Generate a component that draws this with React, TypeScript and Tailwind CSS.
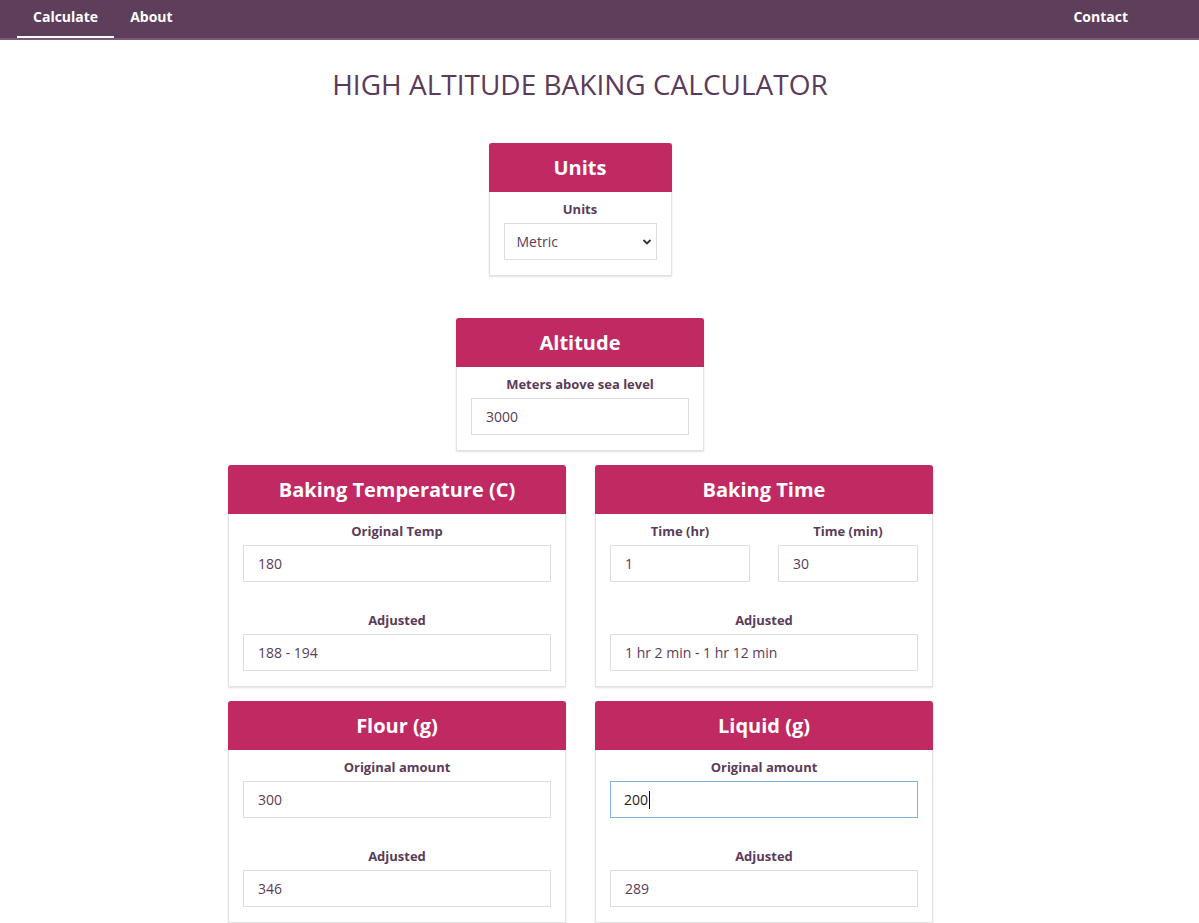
import React from "react";

const font = { fontFamily: '"Open Sans", "Liberation Sans", sans-serif' };

function Card({ title, width, pb, children }: { title: string; width: string; pb: string; children: React.ReactNode }) {
  return (
    <div className={`${width} bg-white rounded-t-[3px] border border-[#e2e2e2] shadow-[0_1px_2px_rgba(0,0,0,0.12)]`}>
      <div className="h-[49px] -mx-px -mt-px bg-[#c02962] rounded-t-[3px] flex items-center justify-center">
        <span className="text-white font-bold text-[20px] leading-none">{title}</span>
      </div>
      <div className={`px-[14px] pt-[8px] ${pb}`}>{children}</div>
    </div>
  );
}

function Label({ children }: { children: React.ReactNode }) {
  return <div className="text-center text-[13px] font-bold leading-[18px] text-[#5b3b5a] mb-[5px]">{children}</div>;
}

function Field({ value }: { value: string }) {
  return (
    <div className="h-[37px] border border-[#dddddd] flex items-center pl-[14px] text-[14px] text-[#5b3b5a]">{value}</div>
  );
}

function FocusedField({ value }: { value: string }) {
  return (
    <div className="h-[37px] border border-[#7db4da] flex items-center pl-[13px] text-[14px] text-[#222222]">
      {value}
      <span className="inline-block w-px h-[18px] bg-[#111] ml-px" />
    </div>
  );
}

export default function App() {
  return (
    <div className="min-h-screen bg-white" style={font}>
      <nav className="h-[40px] bg-[#5d3f5c] border-b-2 border-[#7b5a79]">
        <div className="w-[1160px] h-full flex justify-between pl-[17px] pr-[16px]">
          <div className="flex h-full">
            <div className="relative px-4 pb-[6px] flex items-center text-white text-[14px] font-bold">
              Calculate
              <span className="absolute left-0 right-0 bottom-0 h-[2px] bg-white" />
            </div>
            <div className="px-4 pb-[6px] flex items-center text-white text-[14px] font-bold">About</div>
          </div>
          <div className="px-4 pb-[6px] flex items-center text-white text-[14px] font-bold">Contact</div>
        </div>
      </nav>
      <main className="w-[1160px] flex flex-col items-center">
        <h1 className="mt-[25px] text-[28px] leading-[38px] text-[#5b3b5a] tracking-[0px]">HIGH ALTITUDE BAKING CALCULATOR</h1>
        <div className="mt-[40px]">
          <Card title="Units" width="w-[183px]" pb="pb-[15px]">
            <Label>Units</Label>
            <div className="relative h-[37px] border border-[#dddddd] flex items-center pl-[12px] text-[14px] text-[#5b3b5a]">
              Metric
              <svg className="absolute right-[4px] top-[13px]" width="10" height="10" viewBox="0 0 10 10">
                <path d="M1.5 3 L5 6.5 L8.5 3" fill="none" stroke="#333" strokeWidth="1.8" />
              </svg>
            </div>
          </Card>
        </div>
        <div className="mt-[42px]">
          <Card title="Altitude" width="w-[248px]" pb="pb-[15px]">
            <Label>Meters above sea level</Label>
            <Field value="3000" />
          </Card>
        </div>
        <div className="mt-[14px] ml-[1px] grid grid-cols-[338px_338px] gap-x-[29px] gap-y-[14px]">
          <Card title="Baking Temperature (C)" width="w-[338px]" pb="pb-[15px]">
            <Label>Original Temp</Label>
            <Field value="180" />
            <div className="mt-[29px]">
              <Label>Adjusted</Label>
              <Field value="188 - 194" />
            </div>
          </Card>
          <Card title="Baking Time" width="w-[338px]" pb="pb-[15px]">
            <div className="grid grid-cols-2 gap-x-[28px]">
              <div>
                <Label>Time (hr)</Label>
                <Field value="1" />
              </div>
              <div>
                <Label>Time (min)</Label>
                <Field value="30" />
              </div>
            </div>
            <div className="mt-[29px]">
              <Label>Adjusted</Label>
              <Field value="1 hr 2 min - 1 hr 12 min" />
            </div>
          </Card>
          <Card title="Flour (g)" width="w-[338px]" pb="pb-[15px]">
            <Label>Original amount</Label>
            <Field value="300" />
            <div className="mt-[29px]">
              <Label>Adjusted</Label>
              <Field value="346" />
            </div>
          </Card>
          <Card title="Liquid (g)" width="w-[338px]" pb="pb-[15px]">
            <Label>Original amount</Label>
            <FocusedField value="200" />
            <div className="mt-[29px]">
              <Label>Adjusted</Label>
              <Field value="289" />
            </div>
          </Card>
        </div>
      </main>
    </div>
  );
}
